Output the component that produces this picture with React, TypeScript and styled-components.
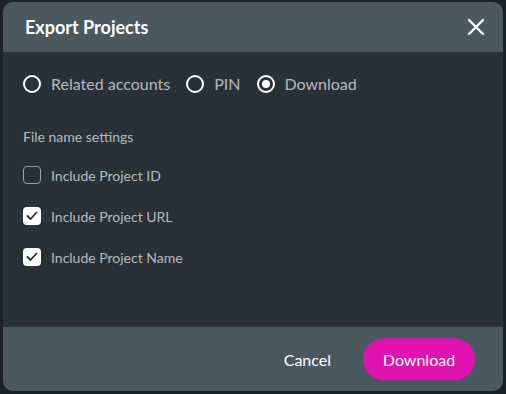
import { useState } from 'react'
import styled, { createGlobalStyle } from 'styled-components'

const GlobalStyle = createGlobalStyle`
  html, body {
    margin: 0;
    padding: 0;
    background: #1b2125;
    font-family: Lato, 'Open Sans', sans-serif;
  }
`

const Page = styled.div`
  width: 506px;
  height: 394px;
  padding: 2px 3px 3px 3px;
  box-sizing: border-box;
`
const Dialog = styled.div`
  height: 389px;
  display: flex;
  flex-direction: column;
  border-radius: 10px;
  overflow: hidden;
  background: #283137;
`
const Header = styled.div`
  height: 50px;
  flex-shrink: 0;
  display: flex;
  align-items: center;
  justify-content: space-between;
  padding: 0 15px 0 22px;
  background: #4a5960;
`
const Title = styled.h2`
  margin: 0;
  font-size: 18px;
  font-weight: 700;
  color: #ffffff;
  letter-spacing: 0;
`
const CloseButton = styled.button`
  border: none;
  background: none;
  padding: 0;
  width: 24px;
  height: 24px;
  display: flex;
  align-items: center;
  justify-content: center;
  cursor: pointer;
`
const Body = styled.div`
  flex: 1;
  padding: 22px 20px 0 20px;
`
const RadioRow = styled.div`
  display: flex;
  align-items: center;
  gap: 16px;
`
const RadioLabel = styled.label`
  display: flex;
  align-items: center;
  gap: 10px;
  font-size: 16px;
  color: #b4bbbf;
  cursor: pointer;
`
const RadioCircle = styled.span<{ $checked: boolean }>`
  width: 18px;
  height: 18px;
  box-sizing: border-box;
  border-radius: 50%;
  border: 2px solid #ffffff;
  display: flex;
  align-items: center;
  justify-content: center;
  &::after {
    content: '';
    width: 8px;
    height: 8px;
    border-radius: 50%;
    background: #ffffff;
    display: ${(p) => (p.$checked ? 'block' : 'none')};
  }
`
const SectionTitle = styled.div`
  margin-top: 35px;
  margin-bottom: 21px;
  font-size: 14px;
  color: #b4bbbf;
`
const CheckList = styled.div`
  display: flex;
  flex-direction: column;
  gap: 23px;
`
const CheckLabel = styled.label`
  display: flex;
  align-items: center;
  gap: 10px;
  font-size: 14px;
  color: #b4bbbf;
  cursor: pointer;
`
const CheckBox = styled.span<{ $checked: boolean }>`
  width: 18px;
  height: 18px;
  box-sizing: border-box;
  border-radius: 4px;
  border: ${(p) => (p.$checked ? 'none' : '1.5px solid #9aa3a8')};
  background: ${(p) => (p.$checked ? '#ffffff' : 'transparent')};
  display: flex;
  align-items: center;
  justify-content: center;
`
const Footer = styled.div`
  height: 64px;
  flex-shrink: 0;
  display: flex;
  align-items: center;
  justify-content: flex-end;
  gap: 32px;
  padding: 0 28px 0 0;
  background: #4a5960;
`
const TextButton = styled.button`
  border: none;
  background: none;
  padding: 0;
  font-family: inherit;
  font-size: 16px;
  color: #ffffff;
  cursor: pointer;
`
const PrimaryButton = styled.button`
  border: none;
  height: 42px;
  width: 112px;
  border-radius: 21px;
  background: #e012b0;
  font-family: inherit;
  font-size: 16px;
  color: #ffffff;
  cursor: pointer;
`

const modes = ['Related accounts', 'PIN', 'Download']

export default function App() {
  const [mode, setMode] = useState('Download')
  const [opts, setOpts] = useState([
    { label: 'Include Project ID', checked: false },
    { label: 'Include Project URL', checked: true },
    { label: 'Include Project Name', checked: true },
  ])

  const toggle = (i: number) =>
    setOpts(opts.map((o, j) => (j === i ? { ...o, checked: !o.checked } : o)))

  return (
    <Page>
      <GlobalStyle />
      <Dialog>
        <Header>
          <Title>Export Projects</Title>
          <CloseButton aria-label="Close">
            <svg width="18" height="18" viewBox="0 0 18 18">
              <path d="M2 2 L16 16 M16 2 L2 16" stroke="#fff" strokeWidth="2.4" strokeLinecap="round" />
            </svg>
          </CloseButton>
        </Header>
        <Body>
          <RadioRow>
            {modes.map((m) => (
              <RadioLabel key={m} onClick={() => setMode(m)}>
                <RadioCircle $checked={mode === m} />
                {m}
              </RadioLabel>
            ))}
          </RadioRow>
          <SectionTitle>File name settings</SectionTitle>
          <CheckList>
            {opts.map((o, i) => (
              <CheckLabel key={o.label} onClick={() => toggle(i)}>
                <CheckBox $checked={o.checked}>
                  {o.checked && (
                    <svg width="12" height="10" viewBox="0 0 12 10">
                      <path d="M1.5 5 L4.5 8 L10.5 1.5" stroke="#283137" strokeWidth="1.8" fill="none" strokeLinecap="round" strokeLinejoin="round" />
                    </svg>
                  )}
                </CheckBox>
                {o.label}
              </CheckLabel>
            ))}
          </CheckList>
        </Body>
        <Footer>
          <TextButton>Cancel</TextButton>
          <PrimaryButton>Download</PrimaryButton>
        </Footer>
      </Dialog>
    </Page>
  )
}
